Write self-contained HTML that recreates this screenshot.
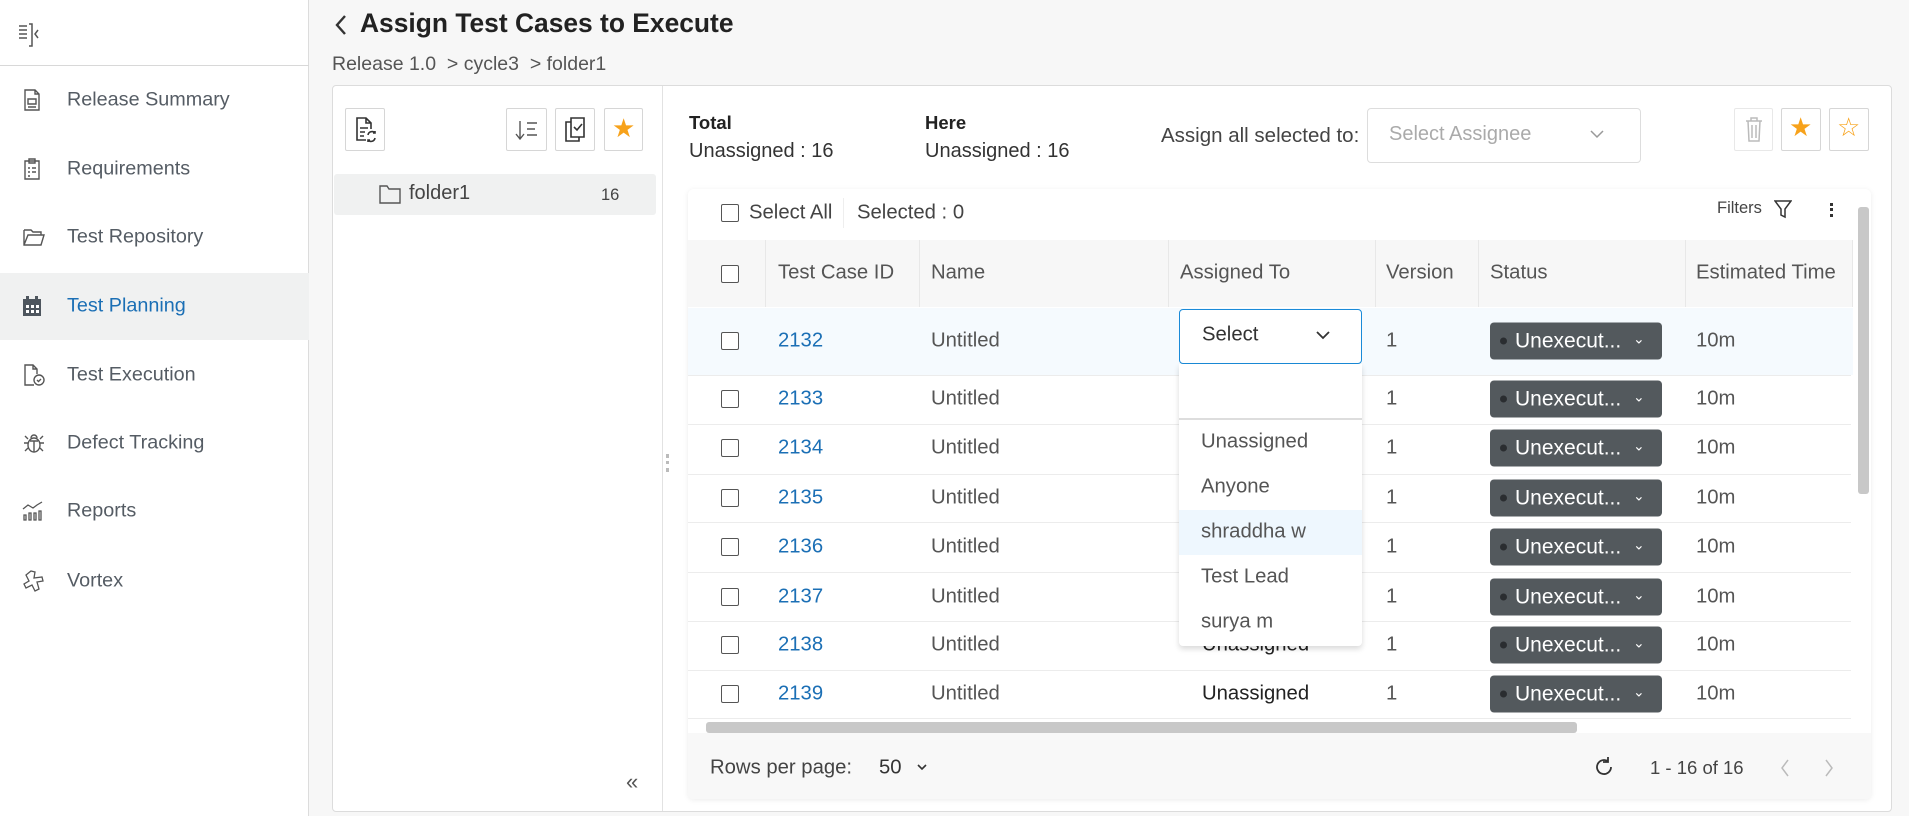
<!DOCTYPE html>
<html><head><meta charset="utf-8"><style>
*{box-sizing:border-box;margin:0;padding:0}
body{width:1909px;height:816px;overflow:hidden;background:#f7f7f7;font-family:"Liberation Sans",Arial,sans-serif;color:#333;position:relative}
.a{position:absolute;white-space:nowrap}
.sb{left:0;top:0;width:309px;height:816px;background:#fff;border-right:1px solid #dcdcdc}
.nav{left:67px;font-size:19.8px;color:#555c64;transform:translateY(-50%)}
.ic{left:22px;transform:translateY(-50%)}
.btn{border:1px solid #d6d6d6;background:#fff;border-radius:2px}
.t{font-size:20.3px;color:#555;transform:translateY(-50%)}
.id{color:#1b6fb5}
.cb{width:18px;height:18px;border:1.5px solid #555;border-radius:2px;background:#fff;transform:translateY(-50%)}
.badge{left:1490px;width:172px;height:37px;background:#53595d;border-radius:4px;color:#fff;font-size:21px;transform:translateY(-50%)}
.badge:before{content:"";position:absolute;left:10px;top:15px;width:7px;height:7px;border-radius:50%;background:#2a2d30}
.badge span{position:absolute;left:25px;top:7px}
.badge i{position:absolute;left:143px;top:8px;font-style:normal;font-size:14px}
.hl{height:1px;background:#ececec;left:688px;width:1163px}
.vs{top:240px;width:1px;height:67px;background:#e8e8e8}
.dd{font-size:20.3px;color:#555;left:1201px;transform:translateY(-50%)}
</style></head><body>
<div class="a sb"></div>
<div class="a" style="left:0;top:65px;width:309px;height:1px;background:#d8d8d8"></div>
<svg class="a" style="left:16px;top:20px" width="28" height="28" viewBox="0 0 28 28" fill="none" stroke="#555" stroke-width="1.5"><path d="M3 6h8M3 10h8M3 14h8M3 18h8M13 4h3v22h-3M22 10l-3 4 3 4"/></svg>
<div class="a" style="left:0;top:273px;width:309px;height:67px;background:#f0f1f1"></div>
<svg class="a ic" style="top:100px" width="20" height="24" viewBox="0 0 20 24" fill="none" stroke="#555" stroke-width="1.4"><path d="M3 2h10l4 4v16H3z M13 2v4h4 M6 11h8v5H6z M6 19h8"/></svg>
<div class="a nav" style="top:100px">Release Summary</div>
<svg class="a ic" style="top:169px" width="20" height="24" viewBox="0 0 20 24" fill="none" stroke="#555" stroke-width="1.4"><path d="M3 4h14v18H3z M7 2h6v4H7z M6 11h2M10 11h4M6 15h2M10 15h4M6 19h2"/></svg>
<div class="a nav" style="top:169px">Requirements</div>
<svg class="a ic" style="top:237px" width="24" height="22" viewBox="0 0 24 22" fill="none" stroke="#555" stroke-width="1.4"><path d="M2 4h7l2 2h8v3 M2 4v15h17l3-10H6L2 19"/></svg>
<div class="a nav" style="top:237px">Test Repository</div>
<svg class="a ic" style="top:306px" width="20" height="22" viewBox="0 0 20 22"><rect x="1" y="4" width="18" height="17" fill="#4e565e"/><rect x="4" y="1" width="3" height="5" fill="#4e565e"/><rect x="13" y="1" width="3" height="5" fill="#4e565e"/><g fill="#fff"><rect x="4" y="10" width="3" height="3"/><rect x="9" y="10" width="3" height="3"/><rect x="14" y="10" width="3" height="3"/><rect x="4" y="15" width="3" height="3"/><rect x="9" y="15" width="3" height="3"/><rect x="14" y="15" width="3" height="3"/></g></svg>
<div class="a nav" style="top:306px;color:#1b6fb5">Test Planning</div>
<svg class="a ic" style="top:375px" width="24" height="24" viewBox="0 0 24 24" fill="none" stroke="#555" stroke-width="1.4"><path d="M12 22H3V2h8l4 4v5 M11 2v4h4"/><circle cx="17" cy="17" r="5"/><path d="M15 17l1.5 1.5L19 16"/></svg>
<div class="a nav" style="top:375px">Test Execution</div>
<svg class="a ic" style="top:443px" width="24" height="24" viewBox="0 0 24 24" fill="none" stroke="#555" stroke-width="1.4"><ellipse cx="12" cy="14" rx="6" ry="7"/><path d="M9 7a3 3 0 0 1 6 0 M12 10v11 M6 12H2M22 12h-4M6 17l-3 3M18 17l3 3M6 8L3 5M18 8l3-3M8 10h8"/></svg>
<div class="a nav" style="top:443px">Defect Tracking</div>
<svg class="a ic" style="top:511px" width="24" height="24" viewBox="0 0 24 24" fill="none" stroke="#555" stroke-width="1.3"><path d="M1 10l5-4 5 3 4-3 5-3 M2 16h2v5H2z M7 14h2v7H7z M12 14h2v7h-2z M17 12h2v9h-2z"/></svg>
<div class="a nav" style="top:511px">Reports</div>
<svg class="a ic" style="top:581px" width="24" height="24" viewBox="0 0 24 24" fill="none" stroke="#555" stroke-width="1.3"><path d="M9 2l4 1-1 6 8-1 1 4-6 1 2 7-4 2-3-6-6 3-2-4 5-3-3-6z"/></svg>
<div class="a nav" style="top:581px">Vortex</div>

<svg class="a" style="left:333px;top:13px" width="16" height="24" viewBox="0 0 16 24" fill="none" stroke="#333" stroke-width="2.4"><path d="M12 3L4 12l8 9"/></svg>
<div class="a" style="left:360px;top:8px;font-size:26.4px;font-weight:bold;color:#222">Assign Test Cases to Execute</div>
<div class="a" style="left:332px;top:53px;font-size:19.5px;color:#555">Release 1.0 &nbsp;&gt;&nbsp;cycle3 &nbsp;&gt;&nbsp;folder1</div>

<div class="a" style="left:332px;top:85px;width:1560px;height:727px;background:#fff;border:1px solid #dcdcdc;border-radius:4px"></div>
<div class="a" style="left:662px;top:86px;width:1px;height:725px;background:#e2e2e2"></div>
<div class="a btn" style="left:345px;top:108px;width:40px;height:43px"></div>
<svg class="a" style="left:354px;top:116px" width="24" height="28" viewBox="0 0 24 28" fill="none" stroke="#333" stroke-width="1.6"><path d="M12 24H3V2h9l5 5v6 M12 2v5h5 M6 12h8M6 16h5M6 20h4"/><path d="M14 19a4 4 0 0 1 7-2M21 22a4 4 0 0 1-7 2M21 15v2h-2M14 26v-2h2"/></svg>
<div class="a btn" style="left:506px;top:108px;width:41px;height:43px"></div>
<svg class="a" style="left:514px;top:117px" width="26" height="26" viewBox="0 0 26 26" fill="none" stroke="#555" stroke-width="1.4"><path d="M6 4v17M2 17l4 5 4-5M13 6h10M13 12h8M13 18h10"/></svg>
<div class="a btn" style="left:555px;top:108px;width:40px;height:43px"></div>
<svg class="a" style="left:563px;top:116px" width="24" height="28" viewBox="0 0 24 28" fill="none" stroke="#333" stroke-width="1.6"><path d="M8 6H3v19h13v-4 M8 2h13v19H8z M11 11l3 3 5-6"/></svg>
<div class="a btn" style="left:604px;top:108px;width:39px;height:43px"></div>
<div class="a" style="left:612px;top:113px;font-size:26px;color:#f7a21b">★</div>
<div class="a" style="left:334px;top:174px;width:322px;height:41px;background:#f0f1f1;border-radius:3px"></div>
<svg class="a" style="left:379px;top:185px" width="22" height="19" viewBox="0 0 22 19" fill="none" stroke="#555" stroke-width="1.4"><path d="M1 1h7l2 3h11v14H1z"/></svg>
<div class="a" style="left:409px;top:182px;font-size:20px;color:#444">folder1</div>
<div class="a" style="left:601px;top:186px;font-size:16.5px;color:#444">16</div>
<div class="a" style="left:626px;top:769px;font-size:22px;color:#555">«</div>
<div class="a" style="left:666px;top:454px;width:3px;height:18px;border-left:3px dotted #bbb"></div>

<div class="a" style="left:689px;top:112px;font-size:18.5px;font-weight:bold;color:#222">Total</div>
<div class="a" style="left:689px;top:140px;font-size:20px;color:#333">Unassigned : 16</div>
<div class="a" style="left:925px;top:112px;font-size:18.5px;font-weight:bold;color:#222">Here</div>
<div class="a" style="left:925px;top:140px;font-size:20px;color:#333">Unassigned : 16</div>
<div class="a" style="left:1161px;top:124px;font-size:20.5px;color:#444">Assign all selected to:</div>
<div class="a" style="left:1367px;top:108px;width:274px;height:55px;border:1px solid #ddd;border-radius:4px"></div>
<div class="a" style="left:1389px;top:123px;font-size:20px;color:#aaa">Select Assignee</div>
<svg class="a" style="left:1589px;top:128px" width="16" height="12" viewBox="0 0 16 12" fill="none" stroke="#999" stroke-width="1.5"><path d="M2 3l6 6 6-6"/></svg>
<div class="a btn" style="left:1734px;top:108px;width:39px;height:43px;border-color:#e8e8e8"></div>
<svg class="a" style="left:1744px;top:115px" width="20" height="28" viewBox="0 0 20 28" fill="none" stroke="#bbb" stroke-width="1.5"><path d="M2 6h16M7 6V3h6v3M4 6l1 20h10l1-20M8 10v13M12 10v13"/></svg>
<div class="a btn" style="left:1781px;top:108px;width:40px;height:43px"></div>
<div class="a" style="left:1789px;top:112px;font-size:26px;color:#f7a21b">★</div>
<div class="a btn" style="left:1829px;top:108px;width:40px;height:43px"></div>
<div class="a" style="left:1837px;top:112px;font-size:26px;color:#f7a21b">☆</div>

<div class="a" style="left:688px;top:189px;width:1183px;height:610px;background:#fff;border-radius:6px;box-shadow:0 1px 6px rgba(0,0,0,.08)"></div>
<div class="a cb" style="left:721px;top:213px"></div>
<div class="a t" style="left:749px;top:213px;color:#444">Select All</div>
<div class="a" style="left:843px;top:198px;width:1px;height:30px;background:#eee"></div>
<div class="a t" style="left:857px;top:213px;color:#444">Selected : 0</div>
<div class="a" style="left:1717px;top:199px;font-size:16.5px;color:#444">Filters</div>
<svg class="a" style="left:1774px;top:199px" width="18" height="20" viewBox="0 0 18 20" fill="none" stroke="#333" stroke-width="1.5"><path d="M1 2h16l-6 8v8l-4-2v-6z"/></svg>
<div class="a" style="left:1830px;top:203px;width:3px;height:14px;border-left:3px dotted #333"></div>

<div class="a" style="left:688px;top:240px;width:1165px;height:67px;background:#f7f7f7"></div>
<div class="a vs" style="left:765px"></div><div class="a vs" style="left:919px"></div><div class="a vs" style="left:1168px"></div><div class="a vs" style="left:1375px"></div><div class="a vs" style="left:1478px"></div><div class="a vs" style="left:1685px"></div><div class="a vs" style="left:1852px"></div>
<div class="a cb" style="left:721px;top:274px"></div>
<div class="a t" style="left:778px;top:273px">Test Case ID</div>
<div class="a t" style="left:931px;top:273px">Name</div>
<div class="a t" style="left:1180px;top:273px">Assigned To</div>
<div class="a t" style="left:1386px;top:273px">Version</div>
<div class="a t" style="left:1490px;top:273px">Status</div>
<div class="a t" style="left:1696px;top:273px">Estimated Time</div>

<div class="a" style="left:688px;top:308px;width:1165px;height:67px;background:#f5fafe"></div>
<div class="a hl" style="top:375px"></div><div class="a hl" style="top:424px"></div><div class="a hl" style="top:474px"></div><div class="a hl" style="top:522px"></div><div class="a hl" style="top:572px"></div><div class="a hl" style="top:621px"></div><div class="a hl" style="top:670px"></div><div class="a hl" style="top:718px"></div>

<div class="a cb" style="left:721px;top:341px"></div><div class="a t id" style="left:778px;top:341px">2132</div><div class="a t" style="left:931px;top:341px">Untitled</div><div class="a t" style="left:1386px;top:341px">1</div><div class="a badge" style="top:341px"><span>Unexecut...</span><i>⌄</i></div><div class="a t" style="left:1696px;top:341px">10m</div>
<div class="a cb" style="left:721px;top:399px"></div><div class="a t id" style="left:778px;top:399px">2133</div><div class="a t" style="left:931px;top:399px">Untitled</div><div class="a t" style="left:1386px;top:399px">1</div><div class="a badge" style="top:399px"><span>Unexecut...</span><i>⌄</i></div><div class="a t" style="left:1696px;top:399px">10m</div>
<div class="a cb" style="left:721px;top:448px"></div><div class="a t id" style="left:778px;top:448px">2134</div><div class="a t" style="left:931px;top:448px">Untitled</div><div class="a t" style="left:1386px;top:448px">1</div><div class="a badge" style="top:448px"><span>Unexecut...</span><i>⌄</i></div><div class="a t" style="left:1696px;top:448px">10m</div>
<div class="a cb" style="left:721px;top:498px"></div><div class="a t id" style="left:778px;top:498px">2135</div><div class="a t" style="left:931px;top:498px">Untitled</div><div class="a t" style="left:1386px;top:498px">1</div><div class="a badge" style="top:498px"><span>Unexecut...</span><i>⌄</i></div><div class="a t" style="left:1696px;top:498px">10m</div>
<div class="a cb" style="left:721px;top:547px"></div><div class="a t id" style="left:778px;top:547px">2136</div><div class="a t" style="left:931px;top:547px">Untitled</div><div class="a t" style="left:1386px;top:547px">1</div><div class="a badge" style="top:547px"><span>Unexecut...</span><i>⌄</i></div><div class="a t" style="left:1696px;top:547px">10m</div>
<div class="a cb" style="left:721px;top:597px"></div><div class="a t id" style="left:778px;top:597px">2137</div><div class="a t" style="left:931px;top:597px">Untitled</div><div class="a t" style="left:1386px;top:597px">1</div><div class="a badge" style="top:597px"><span>Unexecut...</span><i>⌄</i></div><div class="a t" style="left:1696px;top:597px">10m</div>
<div class="a cb" style="left:721px;top:645px"></div><div class="a t id" style="left:778px;top:645px">2138</div><div class="a t" style="left:931px;top:645px">Untitled</div><div class="a t" style="left:1202px;top:645px;color:#222">Unassigned</div><div class="a t" style="left:1386px;top:645px">1</div><div class="a badge" style="top:645px"><span>Unexecut...</span><i>⌄</i></div><div class="a t" style="left:1696px;top:645px">10m</div>
<div class="a cb" style="left:721px;top:694px"></div><div class="a t id" style="left:778px;top:694px">2139</div><div class="a t" style="left:931px;top:694px">Untitled</div><div class="a t" style="left:1202px;top:694px;color:#222">Unassigned</div><div class="a t" style="left:1386px;top:694px">1</div><div class="a badge" style="top:694px"><span>Unexecut...</span><i>⌄</i></div><div class="a t" style="left:1696px;top:694px">10m</div>

<div class="a" style="left:1179px;top:309px;width:183px;height:55px;border:1px solid #1a8ad8;border-radius:4px;background:#fff"></div>
<div class="a t" style="left:1202px;top:335px;color:#333">Select</div>
<svg class="a" style="left:1315px;top:329px" width="16" height="12" viewBox="0 0 16 12" fill="none" stroke="#333" stroke-width="1.8"><path d="M2 3l6 6 6-6"/></svg>
<div class="a" style="left:1179px;top:364px;width:183px;height:282px;background:#fff;box-shadow:0 3px 6px rgba(0,0,0,.15);border-radius:0 0 4px 4px"></div>
<div class="a" style="left:1179px;top:418px;width:183px;height:2px;background:#ddd"></div>
<div class="a" style="left:1179px;top:510px;width:183px;height:45px;background:#eef7fe"></div>
<div class="a dd" style="top:442px">Unassigned</div>
<div class="a dd" style="top:487px">Anyone</div>
<div class="a dd" style="top:532px">shraddha w</div>
<div class="a dd" style="top:577px">Test Lead</div>
<div class="a dd" style="top:622px">surya m</div>

<div class="a" style="left:1858px;top:207px;width:11px;height:287px;background:#c8c8c8;border-radius:3px"></div>
<div class="a" style="left:706px;top:722px;width:871px;height:11px;background:#c8c8c8;border-radius:3px"></div>
<div class="a" style="left:688px;top:733px;width:1183px;height:66px;background:#f8f8f8;border-radius:0 0 6px 6px"></div>
<div class="a t" style="left:710px;top:768px;color:#444">Rows per page:</div>
<div class="a t" style="left:879px;top:768px;color:#333">50</div>
<svg class="a" style="left:915px;top:763px" width="14" height="10" viewBox="0 0 14 10" fill="none" stroke="#333" stroke-width="1.6"><path d="M3 2l4 4 4-4"/></svg>
<svg class="a" style="left:1592px;top:755px" width="24" height="24" viewBox="0 0 24 24" fill="none" stroke="#333" stroke-width="1.8"><path d="M19 12a7 7 0 1 1-3-5.7M16 2v5h-5"/></svg>
<div class="a t" style="left:1650px;top:768px;color:#444;font-size:18.5px">1 - 16 of 16</div>
<svg class="a" style="left:1778px;top:757px" width="14" height="22" viewBox="0 0 14 22" fill="none" stroke="#bbb" stroke-width="1.5"><path d="M10 3L4 11l6 8"/></svg>
<svg class="a" style="left:1822px;top:757px" width="14" height="22" viewBox="0 0 14 22" fill="none" stroke="#bbb" stroke-width="1.5"><path d="M4 3l6 8-6 8"/></svg>
</body></html>
